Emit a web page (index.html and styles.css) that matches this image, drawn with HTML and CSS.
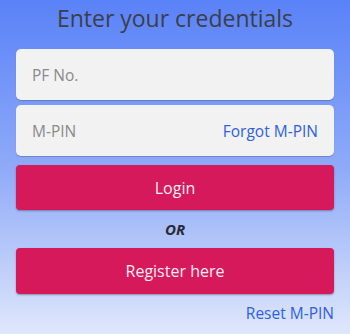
FILE: index.html
```html
<!DOCTYPE html>
<html>
<head>
<meta charset="utf-8">
<link rel="stylesheet" href="styles.css">
</head>
<body>
<div class="page">
  <h1 class="title">Enter your credentials</h1>
  <div class="field"><span class="placeholder">PF No.</span></div>
  <div class="field field-second"><span class="placeholder">M-PIN</span><span class="link">Forgot M-PIN</span></div>
  <div class="btn btn-login">Login</div>
  <div class="or">OR</div>
  <div class="btn btn-register">Register here</div>
  <div class="reset"><span class="link">Reset M-PIN</span></div>
</div>
</body>
</html>
```
FILE: styles.css
```css
html, body {
  margin: 0;
  padding: 0;
  height: 100%;
}
body {
  background: linear-gradient(to bottom, #5a82f8 0%, #8eaaf8 50%, #dfe7fb 100%);
  font-family: "Open Sans", "Noto Sans", sans-serif;
  overflow: hidden;
}
.page {
  padding: 3px 16px 0 16px;
  display: flex;
  flex-direction: column;
}
.title {
  margin: 0;
  font-size: 23px;
  font-weight: 400;
  line-height: 31px;
  color: #3b3f48;
  text-align: center;
}
.field {
  margin-top: 15px;
  height: 51px;
  box-sizing: border-box;
  background: #f2f2f2;
  border-radius: 5px;
  box-shadow: 0 1px 1px rgba(60, 70, 110, 0.35);
  display: flex;
  align-items: center;
  justify-content: space-between;
  padding: 0 16px;
}
.field-second {
  margin-top: 5px;
}
.placeholder {
  font-size: 15.5px;
  color: #8a8a8a;
}
.link {
  font-size: 15.5px;
  color: #2f5fe0;
}
.btn {
  height: 45px;
  background: #d6195b;
  border-radius: 4px;
  box-shadow: 0 1px 2px rgba(50, 50, 90, 0.45);
  color: #fbeef2;
  font-size: 16px;
  display: flex;
  align-items: center;
  justify-content: center;
}
.btn-login {
  margin-top: 9px;
}
.or {
  height: 38px;
  display: flex;
  align-items: center;
  justify-content: center;
  font-style: italic;
  font-weight: 700;
  font-size: 15px;
  color: #262a33;
}
.btn-register {
  height: 46px;
}
.reset {
  margin-top: 8px;
  text-align: right;
  line-height: 22px;
}
```
